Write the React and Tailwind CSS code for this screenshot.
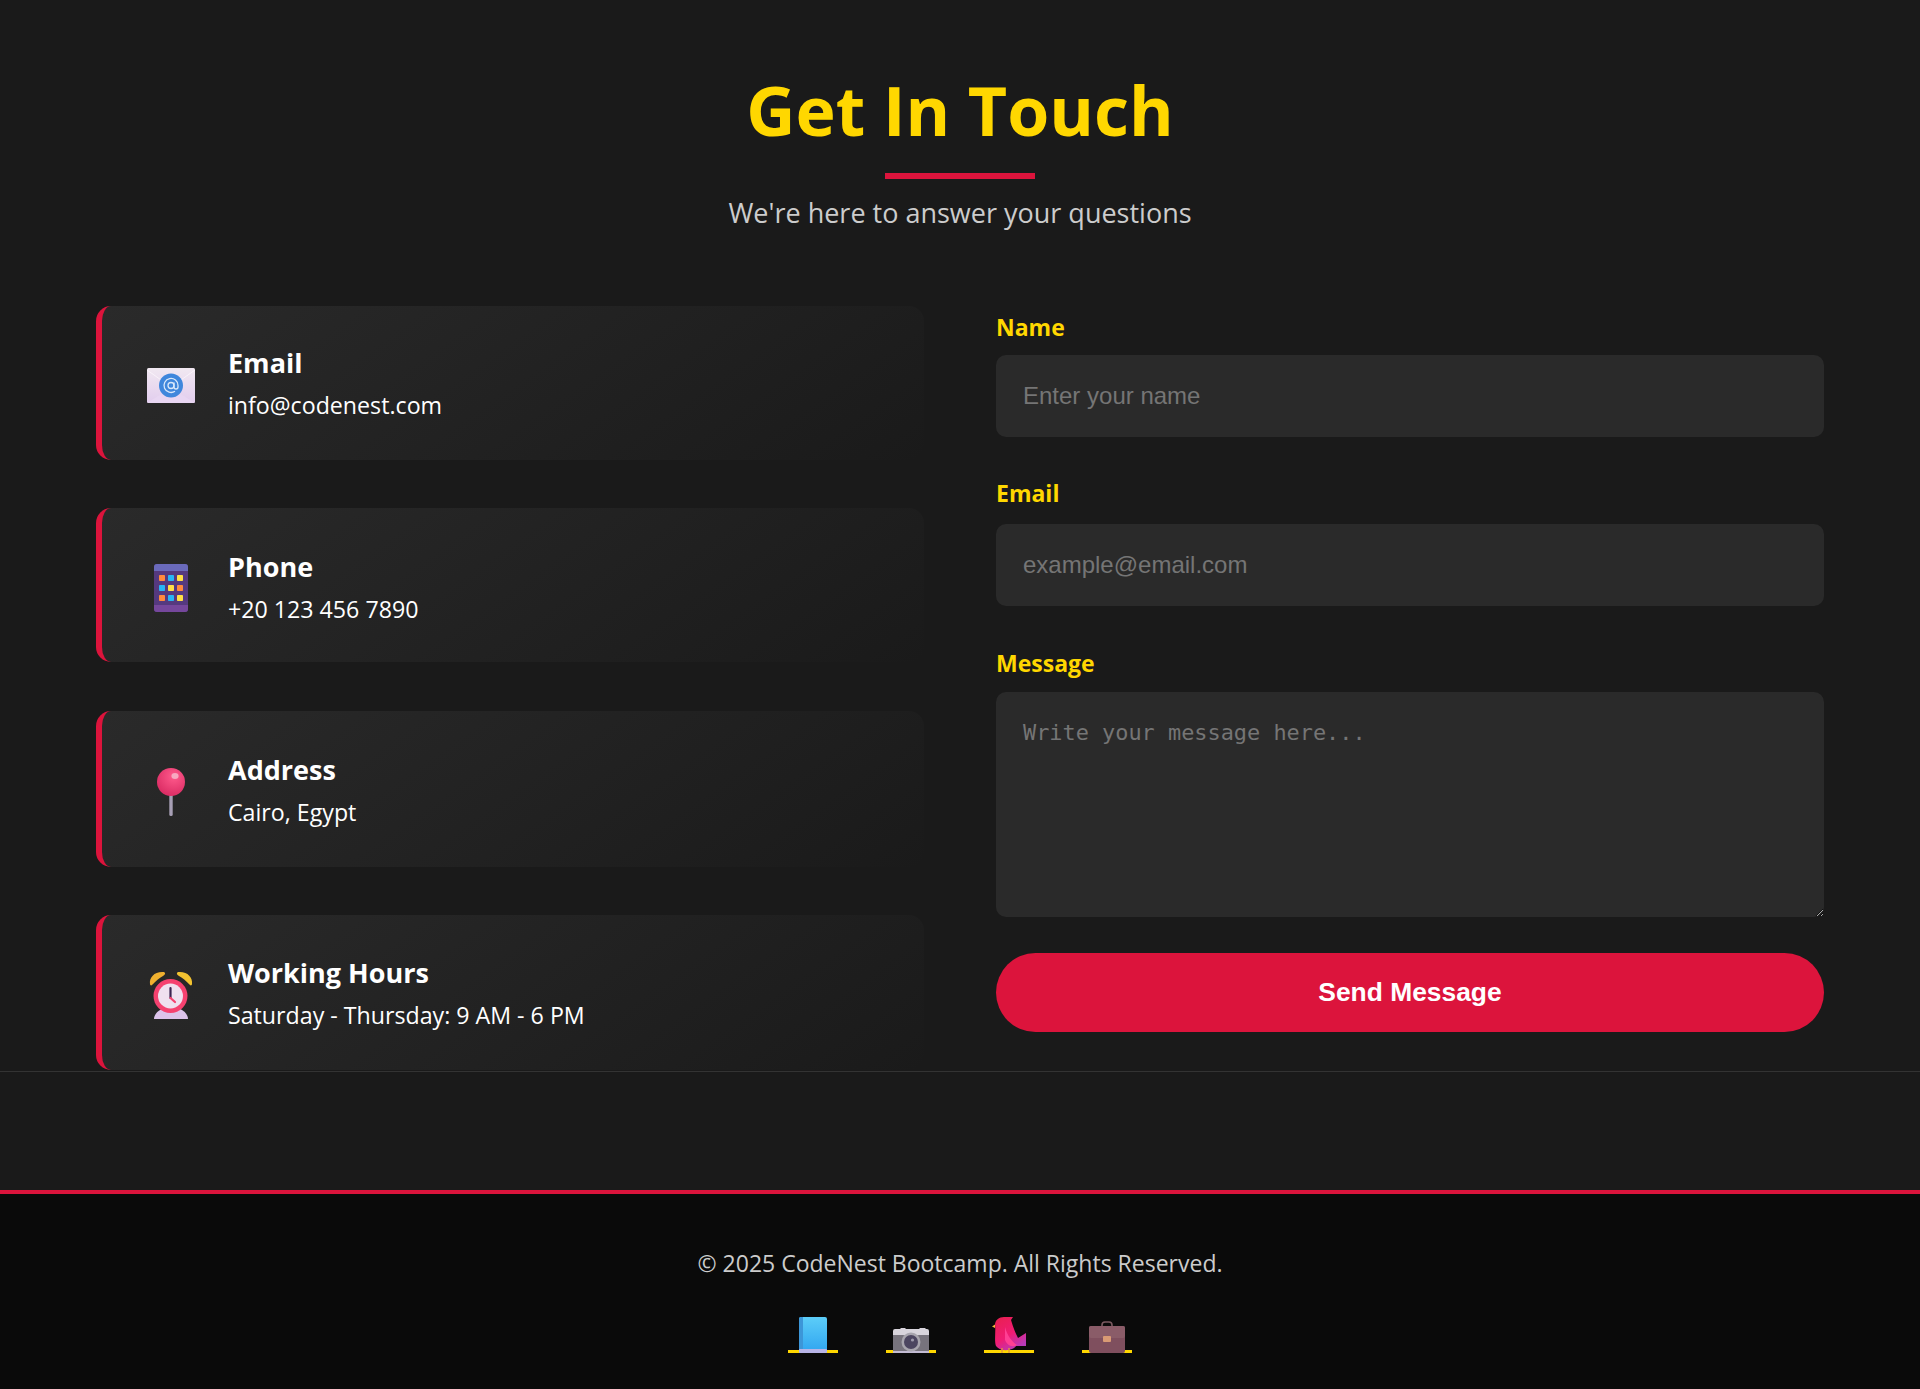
import React from 'react';

const EmailIcon = () => (
    <svg viewBox="0 0 48 35" className="h-[35px] w-[48px]">
        <defs>
            <linearGradient id="env" x1="0" y1="0" x2="0" y2="1">
                <stop offset="0" stopColor="#f1e8f1" />
                <stop offset="1" stopColor="#e2cdee" />
            </linearGradient>
        </defs>
        <rect x="0" y="0" width="48" height="35" rx="1.5" fill="url(#env)" />
        <path d="M0 2 L24 19 L48 2" fill="none" stroke="#fbf6fb" strokeWidth="0.8" />
        <path d="M0 35 L24 20 L48 35" fill="#e8d6f2" />
        <circle cx="24" cy="17.5" r="12" fill="#3f87dc" />
        <circle cx="24" cy="17.5" r="3" fill="none" stroke="#d9e8fa" strokeWidth="1.3" />
        <path d="M27 14.5 V19 a2 2 0 0 0 4 0 V17.5 a7 7 0 1 0 -3 5.7" fill="none" stroke="#d9e8fa" strokeWidth="1.3" />
    </svg>
);

const PhoneIcon = () => {
    const colors = ['#ff8a3d', '#27b6f5', '#ffe045', '#27b6f5', '#ffe045', '#ff8a3d', '#ff8a3d', '#27b6f5', '#ffe045'];
    return (
        <svg viewBox="0 0 34 48" className="h-[48px] w-[34px]">
            <rect width="34" height="48" rx="3" fill="#55397f" />
            <path d="M0 7 V3 a3 3 0 0 1 3 -3 H31 a3 3 0 0 1 3 3 V7 Z" fill="#6a6abb" />
            <path d="M0 41 V45 a3 3 0 0 0 3 3 H31 a3 3 0 0 0 3 -3 V41 Z" fill="#75479c" />
            {colors.map((c, i) => (
                <rect key={i} x={5 + (i % 3) * 9} y={11 + Math.floor(i / 3) * 10} width="6" height="6" rx="0.8" fill={c} />
            ))}
        </svg>
    );
};

const PinIcon = () => (
    <svg viewBox="0 0 28 48" className="h-[48px] w-[28px]">
        <defs>
            <radialGradient id="pin" cx="0.6" cy="0.3" r="0.75">
                <stop offset="0" stopColor="#ff5a8c" />
                <stop offset="1" stopColor="#d92a62" />
            </radialGradient>
        </defs>
        <rect x="12.3" y="26" width="3.4" height="22" rx="1.5" fill="#a79fb5" />
        <circle cx="14" cy="14" r="14" fill="url(#pin)" />
        <ellipse cx="18" cy="8" rx="3.6" ry="3" fill="#f7a8c0" />
    </svg>
);

const ClockIcon = () => (
    <svg viewBox="0 0 44 48" className="h-[48px] w-[44px]">
        <path d="M1 13 C0 6 6 0 15 1 C17 2 16 4 14 5 C10 7 7 10 3 14 C2 15 1 14 1 13 Z" fill="#efb02f" />
        <path d="M43 13 C44 6 38 0 29 1 C27 2 28 4 30 5 C34 7 37 10 41 14 C42 15 43 14 43 13 Z" fill="#f2c230" />
        <path d="M5 48 C5 42 12 36 22 36 C32 36 39 42 39 48 Z" fill="#dcc3ea" />
        <circle cx="21.5" cy="25" r="17" fill="#f5416f" />
        <circle cx="21.5" cy="25" r="12.5" fill="#efe0ef" />
        <path d="M21.5 17 V27" stroke="#3a2350" strokeWidth="2.2" strokeLinecap="round" />
        <path d="M21.5 27 L26 31" stroke="#f5416f" strokeWidth="2.2" strokeLinecap="round" />
    </svg>
);

const BookIcon = () => (
    <svg viewBox="0 0 28 36" className="h-[36px] w-[28px]">
        <defs>
            <linearGradient id="book" x1="0" y1="0" x2="0" y2="1">
                <stop offset="0" stopColor="#5ccdf8" />
                <stop offset="1" stopColor="#2fa4f0" />
            </linearGradient>
        </defs>
        <rect width="28" height="36" rx="2" fill="url(#book)" />
        <path d="M0 2 a2 2 0 0 1 2 -2 H4 V32 H0 Z" fill="#3c96d8" />
        <rect y="32" width="28" height="4" rx="1" fill="#b8b4e6" />
    </svg>
);

const CameraIcon = () => (
    <svg viewBox="0 0 36 25" className="h-[25px] w-[36px]">
        <rect y="3" width="36" height="22" rx="2" fill="#77737d" />
        <path d="M0 7 V3 a2 2 0 0 1 2 -2 H7 L8 0 H12 L13 1 H26 L27 0 H32 L33 1 H34 a2 2 0 0 1 2 2 V7 Z" fill="#d8d4dc" />
        <rect y="23" width="36" height="2" fill="#c4bcd4" />
        <circle cx="18" cy="14" r="9.5" fill="#a8a5ae" />
        <circle cx="18" cy="14" r="7" fill="#4c4560" />
        <circle cx="19.5" cy="12" r="1.6" fill="#9c98aa" />
    </svg>
);

const BirdIcon = () => (
    <svg viewBox="0 0 34 36" className="h-[36px] w-[34px]">
        <defs>
            <linearGradient id="bird" x1="0" y1="0" x2="0.6" y2="1">
                <stop offset="0" stopColor="#e8204f" />
                <stop offset="0.6" stopColor="#f01c74" />
                <stop offset="1" stopColor="#b83ab8" />
            </linearGradient>
        </defs>
        <path d="M3 11 L0 9.5 L3 7.5 Z" fill="#f2b53a" />
        <path d="M3 8 C3 3 7 0 12 0 H21 L19 3 C21 10 24 17 26 21 L34 16 V29 H24 C21 34 8 35 4 29 C2 24 4 14 3 8 Z" fill="url(#bird)" />
        <path d="M13 10 C15 18 20 25 25 28 C20 31 15 28 13 23 Z" fill="#ff3f94" />
        <path d="M10 31 V36 M17 31 V36" stroke="#e8963a" strokeWidth="1.4" />
    </svg>
);

const BriefcaseIcon = () => (
    <svg viewBox="0 0 36 32" className="h-[32px] w-[36px]">
        <path d="M13 7 V4 a3 3 0 0 1 3 -3 H20 a3 3 0 0 1 3 3 V7" fill="none" stroke="#7a5a60" strokeWidth="1.6" />
        <rect y="5" width="36" height="27" rx="2" fill="#7f4f5e" />
        <rect y="5" width="36" height="12" rx="2" fill="#8a5c68" />
        <rect x="14" y="15" width="8" height="6" rx="1" fill="#d99a74" />
    </svg>
);

const contactItems = [
    { title: 'Email', text: 'info@codenest.com', icon: <EmailIcon />, className: 'h-[154px]', textClass: 'pt-[2px]' },
    { title: 'Phone', text: '+20 123 456 7890', icon: <PhoneIcon />, className: 'h-[154px]', textClass: 'pt-[5px]' },
    { title: 'Address', text: 'Cairo, Egypt', icon: <PinIcon />, className: 'mt-[1px] h-[156px]', textClass: 'pt-[3px]' },
    { title: 'Working Hours', text: 'Saturday - Thursday: 9 AM - 6 PM', icon: <ClockIcon />, className: 'h-[155px]', textClass: 'pt-[3px]' },
];

const socialIcons = [<BookIcon />, <CameraIcon />, <BirdIcon />, <BriefcaseIcon />];

const ContactCard = ({ title, text, icon, className, textClass }) => (
    <div className={`flex items-center rounded-[15px] border-l-[6px] border-[#dc143c] bg-[linear-gradient(145deg,#2a2a2a,#1a1a1a)] pl-[45px] ${className}`}>
        <div className="flex w-[48px] justify-center pt-[5px]">{icon}</div>
        <div className={`ml-[33px] ${textClass}`}>
            <h3 className="text-[27px] leading-[42px] font-bold text-white">{title}</h3>
            <p className="text-[23.2px] leading-[42px] text-white">{text}</p>
        </div>
    </div>
);

const fieldClass = 'w-full rounded-[10px] bg-[#2a2a2a] px-[27px] text-white outline-none placeholder:text-[#757575]';
const labelClass = 'text-[23px] leading-[36px] font-bold text-[#ffd700]';

const App = () => {
    return (
        <div className="h-[1389px] overflow-hidden bg-[#1a1a1a] font-['Open_Sans','Noto_Sans',sans-serif]">
            <section className="h-[1071px] px-[96px]">
                <div className="flex flex-col items-center pt-[65px]">
                    <h1 className="text-[68px] leading-[90px] font-bold text-[#ffd700]">Get In Touch</h1>
                    <div className="mt-[18px] h-[6px] w-[150px] bg-[#dc143c]"></div>
                    <p className="mt-[14px] text-[27px] leading-[40px] text-[#cccccc]">We're here to answer your questions</p>
                </div>
                <div className="mt-[73px] grid grid-cols-2 gap-x-[72px]">
                    <div className="flex flex-col gap-[48px]">
                        {contactItems.map((item) => (
                            <ContactCard key={item.title} {...item} />
                        ))}
                    </div>
                    <form className="flex flex-col">
                        <label className={`mt-[3px] ${labelClass}`}>Name</label>
                        <input placeholder="Enter your name" className={`${fieldClass} mt-[10px] h-[82px] font-['Liberation_Sans',sans-serif] text-[24px]`} />
                        <label className={`mt-[38px] ${labelClass}`}>Email</label>
                        <input placeholder="example@email.com" className={`${fieldClass} mt-[13px] h-[82px] font-['Liberation_Sans',sans-serif] text-[24px]`} />
                        <label className={`mt-[39px] ${labelClass}`}>Message</label>
                        <textarea placeholder="Write your message here..." className={`${fieldClass} mt-[11px] h-[225px] py-[27px] font-['DejaVu_Sans_Mono',monospace] text-[21.9px] leading-[28px]`}></textarea>
                        <button type="button" className="mt-[36px] h-[79px] rounded-full bg-[#dc143c] font-['Liberation_Sans',sans-serif] text-[26.4px] font-bold text-white">Send Message</button>
                    </form>
                </div>
            </section>
            <div className="h-[119px] border-t border-[#333333]"></div>
            <footer className="h-[199px] border-t-[4px] border-[#dc143c] bg-[#0a0a0a] pt-[51px] text-center">
                <p className="text-[23px] leading-[36px] text-[#cccccc]">© 2025 CodeNest Bootcamp. All Rights Reserved.</p>
                <div className="mt-[28px] flex justify-center gap-[48px]">
                    {socialIcons.map((icon, i) => (
                        <a key={i} href="#" className="flex h-[44px] w-[50px] items-end justify-center border-b-[3px] border-[#ffd700]">
                            <span className="mb-[-3px] block leading-[0]">{icon}</span>
                        </a>
                    ))}
                </div>
            </footer>
        </div>
    );
};

export default App;
